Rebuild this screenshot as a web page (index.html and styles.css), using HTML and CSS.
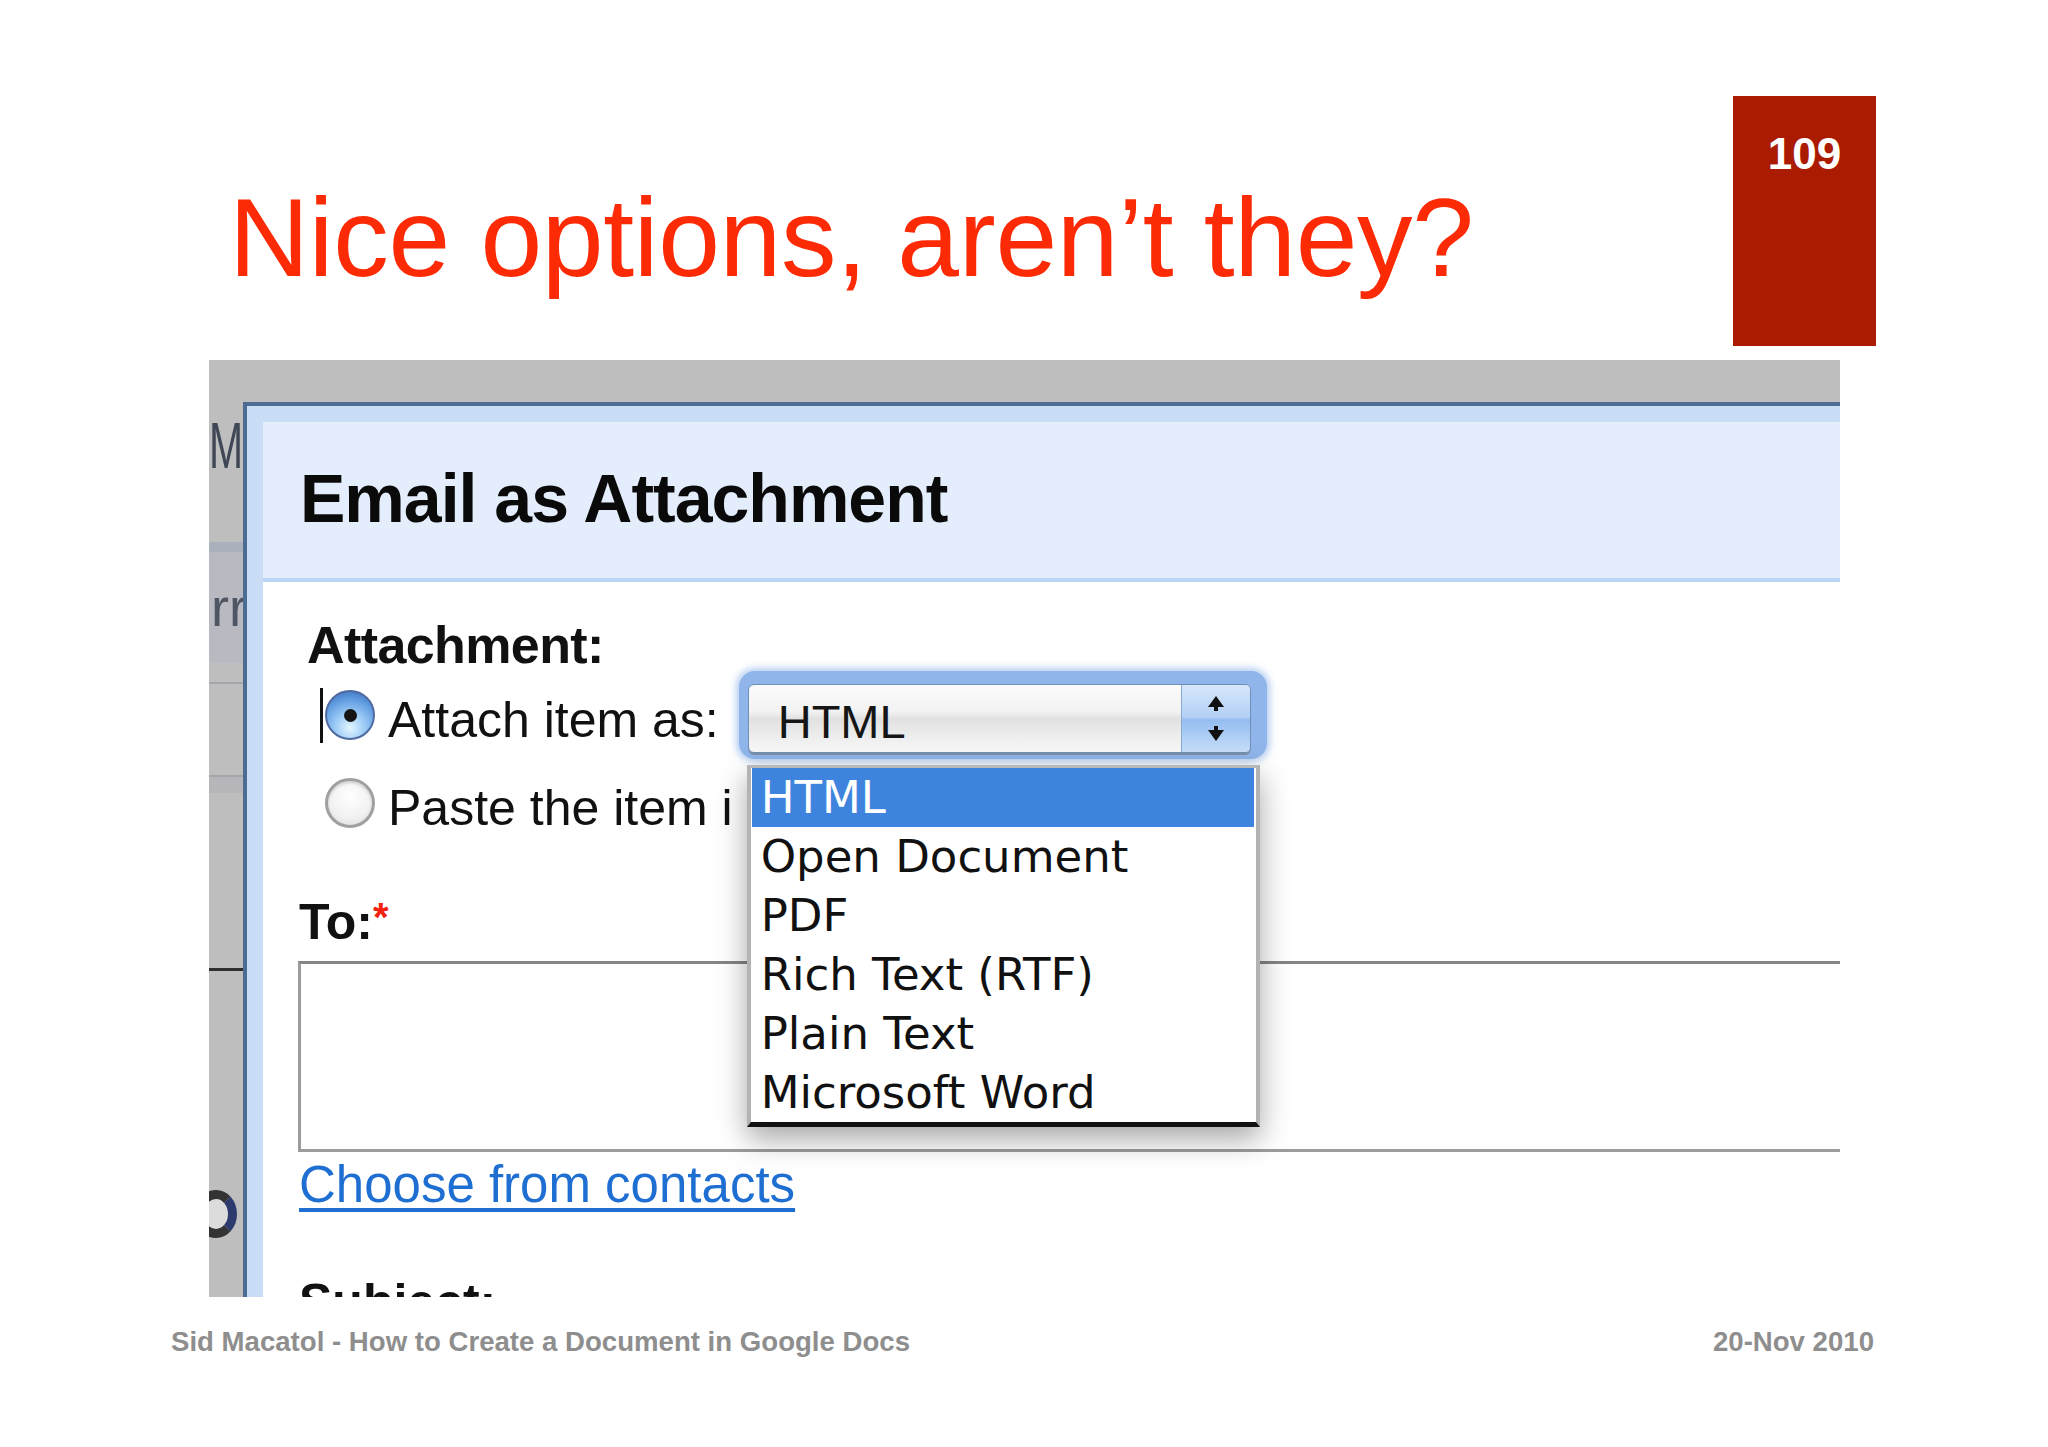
FILE: index.html
```html
<!DOCTYPE html>
<html lang="en">
<head>
<meta charset="utf-8">
<title>Nice options, aren’t they?</title>
<link rel="stylesheet" href="styles.css">
</head>
<body>
<div class="slide">
  <header class="head">
    <h1 class="title">Nice options, aren’t they?</h1>
    <div class="pagenum">109</div>
  </header>

  <div class="shot">
    <div class="bgpage">
      <div class="frag-m"><span>M</span></div>
      <div class="frag-band"></div>
      <div class="frag-zone"><span class="frag-rr">rr</span></div>
      <div class="frag-line1"></div>
      <div class="frag-line2"></div>
      <div class="frag-black"></div>
      <div class="frag-o"></div>
    </div>

    <div class="dialog">
      <div class="dlg">
        <div class="dlg-title">Email as Attachment</div>
        <div class="dlg-body">
          <div class="attach-lbl">Attachment:</div>

          <div class="row row1">
            <span class="caret"></span>
            <span class="radio on"></span>
            <span class="opt">Attach item as:</span>
            <div class="select-wrap">
              <div class="select">
                <span class="sel-val">HTML</span>
                <span class="stepper">
                  <svg width="18" height="46" viewBox="0 0 18 46">
                    <polygon points="9,0 17,11 1,11" fill="#111"/>
                    <rect x="7" y="11" width="4" height="4" fill="#111"/>
                    <rect x="7" y="30" width="4" height="4" fill="#111"/>
                    <polygon points="1,34 17,34 9,45" fill="#111"/>
                  </svg>
                </span>
              </div>
              <ul class="menu">
                <li class="sel">HTML</li>
                <li>Open Document</li>
                <li>PDF</li>
                <li>Rich Text (RTF)</li>
                <li>Plain Text</li>
                <li>Microsoft Word</li>
              </ul>
            </div>
          </div>

          <div class="row row2">
            <span class="radio off"></span>
            <span class="opt">Paste the item i</span>
          </div>

          <div class="to">To:<span class="req">*</span></div>
          <div class="textarea"></div>
          <a class="link">Choose from contacts</a>
          <div class="subject">Subject:</div>
        </div>
      </div>
    </div>
  </div>

  <footer class="foot">
    <span>Sid Macatol - How to Create a Document in Google Docs</span>
    <span>20-Nov 2010</span>
  </footer>
</div>
</body>
</html>
```

FILE: styles.css
```css
html, body {
  margin: 0;
  padding: 0;
  background: #fff;
}

.slide {
  width: 2048px;
  height: 1447px;
  overflow: hidden;
  background: #fff;
  font-family: "Liberation Sans", Arial, sans-serif;
}

/* ---------- header ---------- */
.head {
  display: flex;
  height: 360px;
  box-sizing: border-box;
  padding-left: 229px;
  padding-right: 172px;
}

.title {
  margin: 183px 0 0;
  font-weight: normal;
  font-size: 111px;
  line-height: 111px;
  letter-spacing: -0.3px;
  color: #fc2a05;
  white-space: nowrap;
}

.pagenum {
  margin-left: auto;
  margin-top: 96px;
  width: 143px;
  height: 250px;
  box-sizing: border-box;
  padding-top: 36px;
  background: #aa1b02;
  color: #fff;
  font-weight: bold;
  font-size: 44px;
  line-height: 44px;
  text-align: center;
}

/* ---------- screenshot ---------- */
.shot {
  display: flex;
  margin-left: 209px;
  width: 1631px;
  height: 937px;
  background: #bebebe;
  overflow: hidden;
}

.bgpage {
  width: 34px;
  flex: none;
  overflow: hidden;
}

.frag-m {
  margin-top: 62px;
  height: 48px;
  font-size: 64px;
  line-height: 48px;
  color: #3f4656;
  white-space: nowrap;
}
.frag-m span {
  display: inline-block;
  transform: scale(0.64, 1);
  transform-origin: left center;
}

.frag-band {
  margin-top: 72px;
  height: 10px;
  background: #aab1bd;
}

.frag-zone {
  height: 111px;
  box-sizing: border-box;
  padding-top: 26px;
  padding-left: 2px;
  background: #b8b9c1;
}
.frag-rr {
  display: block;
  font-size: 54px;
  line-height: 58px;
  color: #4f5663;
  white-space: nowrap;
}

.frag-line1 {
  margin-top: 19px;
  height: 2px;
  background: #a5a5ad;
}

.frag-line2 {
  margin-top: 91px;
  height: 18px;
  box-sizing: border-box;
  border-top: 2px solid #a4a4ac;
  background: #b5b5ba;
}

.frag-black {
  margin-top: 175px;
  height: 3px;
  background: #2e2e2e;
}

.frag-o {
  margin-top: 219px;
  margin-left: -14px;
  width: 42px;
  height: 48px;
  box-sizing: border-box;
  border: 9px solid #333;
  border-right-color: #2d3a6e;
  border-radius: 50%;
  background: #dcdcdc;
}

/* ---------- dialog ---------- */
.dialog {
  flex: 1;
  min-width: 0;
  display: flex;
  flex-direction: column;
  margin-top: 42px;
  border-top: 4px solid #4d6c91;
  border-left: 4px solid #4d6c91;
  background: #c9ddf7;
  padding: 16px 0 0 16px;
}

.dlg {
  flex: 1;
  background: #fff;
}

.dlg-title {
  height: 160px;
  box-sizing: border-box;
  padding: 42px 0 0 37px;
  background: #e3edfb;
  border-bottom: 4px solid #bcd4f3;
  font-weight: bold;
  font-size: 68px;
  line-height: 68px;
  letter-spacing: -1px;
  color: #0a0a0a;
  white-space: nowrap;
}

.dlg-body {
  padding-left: 36px;
  color: #111;
}

.attach-lbl {
  margin: 37px 0 0 8px;
  font-weight: bold;
  font-size: 52px;
  line-height: 52px;
  letter-spacing: -0.6px;
}

.row {
  display: flex;
  align-items: center;
  height: 88px;
}

.caret {
  flex: none;
  width: 3px;
  height: 55px;
  margin-left: 21px;
  background: #111;
}

.radio {
  flex: none;
  width: 50px;
  height: 50px;
  box-sizing: border-box;
  border-radius: 50%;
}

.radio.on {
  margin-left: 2px;
  display: flex;
  align-items: center;
  justify-content: center;
  border: 2px solid #4f6aa0;
  background: radial-gradient(circle at 50% 78%, #e4f6ff 0%, #9ccbf6 35%, #5b98de 70%, #3767b4 100%);
}
.radio.on::after {
  content: "";
  width: 13px;
  height: 13px;
  border-radius: 50%;
  background: #151515;
}

.radio.off {
  margin-left: 26px;
  border: 3px solid #a0a0a0;
  background: radial-gradient(circle at 50% 35%, #ffffff 0%, #f1f1f1 60%, #d6d6d6 100%);
  box-shadow: inset 0 2px 3px rgba(0, 0, 0, 0.15);
}

.opt {
  margin-left: 13px;
  padding-top: 10px;
  font-size: 50px;
  line-height: 50px;
  white-space: nowrap;
}

/* select */
.select-wrap {
  position: relative;
  flex: none;
  margin-left: 20px;
  width: 528px;
  height: 88px;
  box-sizing: border-box;
  padding: 13px 16px 6px 9px;
  border-radius: 16px;
  background: #8fb5ea;
  box-shadow: 0 0 7px 3px rgba(120, 165, 230, 0.55);
}

.select {
  display: flex;
  height: 100%;
  box-sizing: border-box;
  border: 1px solid #6f8fb8;
  border-radius: 6px;
  overflow: hidden;
  background: linear-gradient(#fbfbfb 0%, #f2f2f2 40%, #e1e1e1 50%, #ececec 75%, #f8f8f8 100%);
  box-shadow: 0 2px 0 #7d8fa6;
}

.sel-val {
  flex: 1;
  padding: 6px 0 0 29px;
  font-size: 47px;
  line-height: 61px;
  color: #151515;
}

.stepper {
  flex: none;
  width: 68px;
  display: flex;
  align-items: center;
  justify-content: center;
  border-left: 1px solid #8aa9d0;
  background: linear-gradient(#d7e7fb 0%, #b3d0f4 48%, #94bdf0 52%, #c6def9 100%);
}

/* dropdown menu (overlay) */
.menu {
  position: absolute;
  left: 8px;
  top: 94px;
  z-index: 2;
  width: 513px;
  box-sizing: border-box;
  margin: 0;
  padding: 0;
  list-style: none;
  background: #fff;
  border-top: 3px solid #b9b9b9;
  border-left: 4px solid #b3b3b3;
  border-right: 4px solid #b3b3b3;
  border-bottom: 5px solid #111;
  box-shadow: 0 12px 28px rgba(0, 0, 0, 0.35);
  font-family: "DejaVu Sans", Verdana, sans-serif;
  font-size: 45px;
  line-height: 59px;
  color: #111;
}

.menu li {
  height: 59px;
  padding-left: 10px;
  white-space: nowrap;
}

.menu li.sel {
  margin: 0 2px 0 1px;
  padding-left: 9px;
  background: #3e84df;
  color: #fff;
}

/* To field */
.to {
  margin-top: 50px;
  font-weight: bold;
  font-size: 50px;
  line-height: 50px;
}

.req {
  font-size: 40px;
  line-height: 40px;
  vertical-align: top;
  color: #f2200f;
}

.textarea {
  margin-top: 14px;
  margin-left: -1px;
  height: 191px;
  box-sizing: border-box;
  border: 3px solid #9c9c9c;
  border-top-color: #858585;
  border-right: none;
  background: #fff;
}

.link {
  display: block;
  margin-top: 7px;
  font-size: 51px;
  line-height: 51px;
  color: #1f6fd3;
  text-decoration: underline;
  text-decoration-thickness: 4px;
  text-underline-offset: 6px;
  white-space: nowrap;
}

.subject {
  margin-top: 67px;
  font-weight: bold;
  font-size: 50px;
  line-height: 50px;
}

/* ---------- footer ---------- */
.foot {
  display: flex;
  justify-content: space-between;
  margin-top: 31px;
  padding: 0 174px 0 171px;
  font-weight: bold;
  font-size: 27.6px;
  line-height: 28px;
  color: #8e8e8e;
}
```
